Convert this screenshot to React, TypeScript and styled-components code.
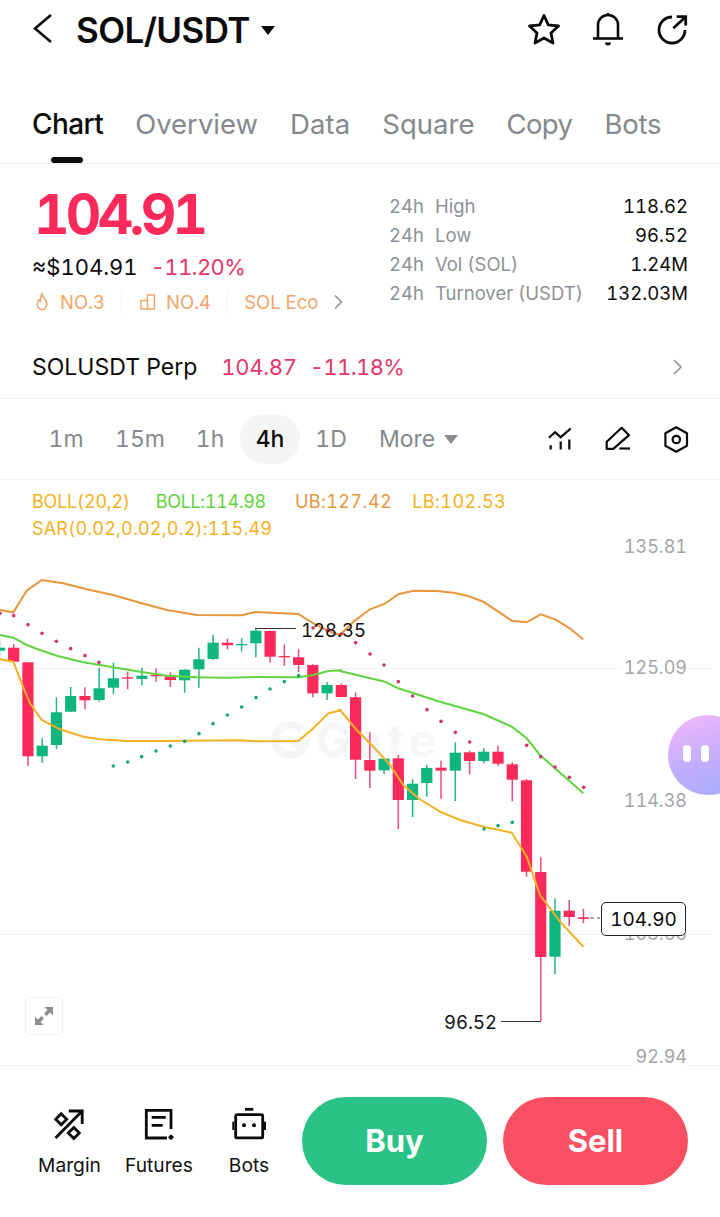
import React from 'react';
import styled, { createGlobalStyle } from 'styled-components';

const Global = createGlobalStyle`
  html, body { margin: 0; padding: 0; background: #fff; }
  * { box-sizing: border-box; }
  body { font-family: Inter, "Liberation Sans", sans-serif; color: #0b0b0b; -webkit-font-smoothing: antialiased; font-variant-numeric: tabular-nums; }
`;

const Page = styled.div`
  width: 720px;
  height: 1217px;
  display: flex;
  flex-direction: column;
  overflow: hidden;
  background: #fff;
`;

const Header = styled.header`
  height: 60px;
  display: flex;
  align-items: center;
  padding: 0 30px 0 32px;
`;
const BackIcon = styled.svg`
  width: 24px;
  height: 32px;
  flex: none;
`;
const Pair = styled.h1`
  margin: 0 0 0 20px;
  font-size: 35px;
  line-height: 40px;
  font-weight: 600;
  letter-spacing: -0.6px;
`;
const Caret = styled.span`
  width: 0;
  height: 0;
  margin-left: 11px;
  border-left: 7px solid transparent;
  border-right: 7px solid transparent;
  border-top: 9px solid #0b0b0b;
`;
const HeaderIcons = styled.div`
  margin-left: auto;
  display: flex;
  gap: 28px;
`;
const IconSvg = styled.svg<{ $size?: number }>`
  width: ${p => p.$size ?? 36}px;
  height: ${p => p.$size ?? 36}px;
  flex: none;
  display: block;
`;
const Chevron = styled(IconSvg)`
  margin-left: 4px;
`;

const Tabs = styled.nav`
  height: 104px;
  padding: 41px 32px 0;
  display: flex;
  gap: 32px;
  border-bottom: 1px solid #ececec;
`;
const Tab = styled.div<{ $active?: boolean; $ls?: number }>`
  position: relative;
  height: 62px;
  font-size: ${p => (p.$active ? 28 : 27.5)}px;
  line-height: 46px;
  font-weight: ${p => (p.$active ? 500 : 400)};
  letter-spacing: ${p => (p.$active ? -0.6 : p.$ls ?? 0)}px;
  color: ${p => (p.$active ? '#0b0b0b' : '#85888c')};
  ${p =>
    p.$active &&
    `&::after {
      content: '';
      position: absolute;
      left: 19px;
      bottom: 0;
      width: 32px;
      height: 6px;
      border-radius: 3px;
      background: #0b0b0b;
    }`}
`;

const Summary = styled.section`
  height: 171px;
  padding: 0 32px;
  display: flex;
  justify-content: space-between;
`;
const PriceCol = styled.div`
  display: flex;
  flex-direction: column;
`;
const Price = styled.div`
  margin: 17px 0 0 2px;
  font-size: 55px;
  line-height: 66px;
  font-weight: 700;
  letter-spacing: -3.7px;
  color: #fc2a5a;
`;
const PriceLine = styled.div`
  margin-top: 5px;
  display: flex;
  gap: 13px;
  font-size: 22px;
  line-height: 30px;
`;
const Change = styled.span`
  color: #e2386a;
  letter-spacing: -0.6px;
`;
const TagRow = styled.div`
  margin-top: 8px;
  display: flex;
  align-items: center;
  font-size: 18.5px;
  line-height: 30px;
  color: #f0a469;
`;
const Tag = styled.span<{ $sep?: boolean }>`
  display: flex;
  align-items: center;
  gap: 8px;
  height: 24px;
  ${p => p.$sep && `padding-right: 16px; margin-right: 16px; border-right: 1px solid #f3f3f3;`}
`;
const Stats = styled.div`
  margin-top: 28px;
  width: 299px;
  display: grid;
  grid-template-columns: 1fr auto;
  grid-auto-rows: 29px;
  font-size: 18.5px;
  line-height: 29px;
`;
const StatLabel = styled.span`
  display: flex;
  gap: 11px;
  color: #8e9196;
  white-space: nowrap;
`;
const StatValue = styled.span`
  text-align: right;
  color: #0b0b0b;
`;

const PerpRow = styled.section`
  height: 64px;
  padding: 0 34px 0 32px;
  display: flex;
  align-items: center;
  font-size: 22px;
  border-bottom: 1px solid #efefef;
`;
const PerpName = styled.span`
  margin-right: 24px;
  font-size: 23px;
`;
const PerpPrice = styled.span`
  margin-right: 13px;
  letter-spacing: -0.3px;
  color: #e2386a;
`;
const PushRight = styled.span`
  margin-left: auto;
  display: flex;
`;

const Intervals = styled.section`
  height: 81px;
  padding: 0 30px 0 36px;
  display: flex;
  align-items: center;
  border-bottom: 1px solid #efefef;
  font-size: 23px;
  color: #85888c;
`;
const Interval = styled.span<{ $active?: boolean; $gap?: number }>`
  display: flex;
  align-items: center;
  justify-content: center;
  height: 50px;
  min-width: 60px;
  margin-right: ${p => p.$gap ?? 0}px;
  border-radius: 25px;
  background: ${p => (p.$active ? '#f5f5f5' : 'transparent')};
  color: ${p => (p.$active ? '#0b0b0b' : '#85888c')};
  font-weight: ${p => (p.$active ? 500 : 400)};
`;
const SmallCaret = styled.span`
  width: 0;
  height: 0;
  margin-left: 9px;
  border-left: 7px solid transparent;
  border-right: 7px solid transparent;
  border-top: 9px solid #8a8d91;
`;
const ToolIcons = styled.div`
  margin-left: auto;
  display: flex;
  gap: 28px;
`;

const Chart = styled.section`
  position: relative;
  height: 586px;
  border-bottom: 1px solid #f0f0f0;
`;
const Legend = styled.div`
  position: relative;
  z-index: 2;
  padding: 8px 32px 0;
  font-size: 18px;
  line-height: 27px;
`;
const LegendRow = styled.div`
  display: flex;
`;
const LegendItem = styled.span<{ $color: string; $ls?: number; $mr?: number }>`
  color: ${p => p.$color};
  letter-spacing: ${p => p.$ls ?? 0}px;
  margin-right: ${p => p.$mr ?? 0}px;
`;
const ChartCanvas = styled.svg`
  position: absolute;
  left: 0;
  top: 0;
  width: 720px;
  height: 585px;
`;
const AxisLabel = styled.span<{ $y: number }>`
  position: absolute;
  right: 33px;
  top: ${p => p.$y}px;
  padding-left: 2px;
  background: #fff;
  font-size: 18px;
  line-height: 24px;
  color: #a3a5a8;
`;
const PriceTag = styled.div`
  position: absolute;
  left: 601px;
  top: 422px;
  width: 85px;
  height: 34px;
  border: 1px solid #222;
  border-radius: 5px;
  background: #fff;
  font-size: 19px;
  line-height: 33px;
  text-align: center;
`;
const Extreme = styled.span<{ $x: number; $y: number }>`
  position: absolute;
  left: ${p => p.$x}px;
  top: ${p => p.$y}px;
  font-size: 18.5px;
  line-height: 24px;
  color: #111;
`;
const Expand = styled.div`
  position: absolute;
  left: 25px;
  top: 517px;
  width: 38px;
  height: 38px;
  display: flex;
  align-items: center;
  justify-content: center;
  border: 1px solid #eeeeee;
  border-radius: 6px;
  background: #fff;
`;
const Bubble = styled.div`
  position: absolute;
  left: 668px;
  top: 235px;
  width: 80px;
  height: 80px;
  display: flex;
  gap: 10px;
  padding: 30px 0 0 15px;
  border-radius: 40px;
  background: linear-gradient(160deg, #f6b9fb 0%, #c5aefb 50%, #a5aefc 100%);
`;
const Eye = styled.span`
  width: 8px;
  height: 17px;
  border-radius: 4px;
  background: #fff;
`;
const Watermark = styled.div`
  position: absolute;
  left: 272px;
  top: 234px;
  display: flex;
  align-items: center;
  gap: 6px;
  font-size: 46px;
  line-height: 52px;
  font-weight: 700;
  letter-spacing: 5px;
  color: #f5f6f6;
`;

const Footer = styled.footer`
  flex: 1;
  display: flex;
  padding: 31px 32px 0 28px;
`;
const Action = styled.div<{ $w: number }>`
  width: ${p => p.$w}px;
  display: flex;
  flex-direction: column;
  align-items: center;
  font-size: 19.2px;
  line-height: 24px;
  color: #111;
  padding-top: 10px;
`;
const ActionIcon = styled.svg`
  width: 36px;
  height: 36px;
  margin-bottom: 10px;
`;
const TradeButton = styled.div<{ $bg: string; $ml: number }>`
  width: 185px;
  height: 88px;
  margin-left: ${p => p.$ml}px;
  border-radius: 44px;
  background: ${p => p.$bg};
  color: #fff;
  font-size: 31px;
  font-weight: 700;
  line-height: 88px;
  text-align: center;
`;

const RED = '#fc2a5a';
const GREEN = '#0fb57f';

type C = ['r' | 'g', number, number, number, number];
const candles: C[] = [
  ['g', 640, 662, 647.7, 650.7],
  ['r', 644, 662, 647.7, 661.7],
  ['r', 662.3, 766, 662.3, 756.3],
  ['g', 738.3, 762.7, 745.7, 756.3],
  ['g', 697.3, 749, 712.3, 745],
  ['g', 687, 711.7, 696, 711.7],
  ['r', 687.3, 709.3, 696, 700.3],
  ['g', 667.7, 701.7, 688.3, 700],
  ['g', 662.7, 694, 678.3, 687.7],
  ['r', 671.7, 689.3, 677.3, 678.7],
  ['g', 667.7, 685.3, 675.7, 679],
  ['r', 668.3, 681.7, 675, 676.3],
  ['r', 672.3, 687, 676.3, 680],
  ['g', 669.3, 692.7, 669.7, 680.3],
  ['g', 647.7, 687.7, 659.3, 669.3],
  ['g', 634.7, 660, 642.7, 659],
  ['r', 638.7, 649.3, 642.7, 645.3],
  ['g', 638.3, 651.7, 644, 645.3],
  ['g', 628.3, 657.3, 630.7, 643.3],
  ['r', 630.7, 662.7, 631, 656.7],
  ['r', 644.3, 666, 656, 657.3],
  ['r', 649.3, 672, 657.3, 665],
  ['r', 664.3, 697.3, 665, 693.3],
  ['g', 682, 700, 685, 693.3],
  ['r', 683.3, 697.3, 685, 697],
  ['r', 692.3, 779, 697.3, 759.7],
  ['r', 732.3, 788, 760, 770.7],
  ['g', 758.3, 774, 758.7, 770.3],
  ['r', 755, 829, 758.3, 800],
  ['g', 779.3, 817, 783.7, 800],
  ['g', 765, 796.7, 768, 783],
  ['r', 760.7, 798.7, 767.7, 770.7],
  ['g', 742.3, 801, 752.7, 770.7],
  ['r', 750.7, 774.3, 752.3, 761],
  ['g', 748.3, 763.3, 751.7, 761],
  ['r', 745.7, 765.7, 751.7, 763.7],
  ['r', 762.3, 801.3, 764.3, 779.7],
  ['r', 779, 876.7, 780.3, 871.7],
  ['r', 857.3, 1021, 872, 957],
  ['g', 898.3, 974, 910.7, 956.7],
  ['r', 900, 926, 910.7, 917],
  ['r', 908.7, 923.3, 917.3, 918.9],
];
const cx = (i: number) => -0.55 + i * 14.245;

const z4 = (pts: number[][]) => pts.map(([x, y]) => [x / 3, 560 + y / 3]);
const z5 = (pts: number[][]) => pts.map(([x, y]) => [340 + x / 3, 560 + y / 3]);
const z6 = (pts: number[][]) => pts.map(([x, y]) => [400 + x / 3, 780 + y / 3]);
const OFFSET = 480;
const poly = (pts: number[][]) => pts.map(([x, y]) => `${x.toFixed(1)},${(y - OFFSET).toFixed(1)}`).join(' ');

const upper = [
  ...z4([[0,150],[40,157],[80,92],[125,60],[190,70],[260,88],[340,105],[420,128],[500,150],[590,165],[725,166],[765,156],[895,162],[940,190],[985,213],[1020,225]]),
  ...z5([[0,225],[40,185],[90,148],[135,131],[175,103],[220,92],[290,93],[340,98],[385,108],[430,125],[470,152],[515,182],[560,187],[602,163],[645,178],[685,202],[730,238]]),
];
const mid = [
  ...z4([[0,225],[40,233],[80,255],[120,270],[170,287],[250,307],[340,322],[420,335],[500,347],[590,352],[680,353],[770,351],[895,352],[940,345],[985,333],[1025,331]]),
  ...z5([[0,333],[135,365],[175,385],[300,425],[430,462],[515,500],[560,535],[600,585],[645,625],[730,700]]),
];
const lower = [
  ...z4([[0,298],[40,305],[65,370],[90,430],[125,480],[180,508],[250,530],[300,538],[380,543],[480,543],[720,541],[760,544],[895,543],[940,505],[985,460],[1025,451]]),
  ...z5([[0,450],[50,510],[100,560],[150,615],[190,675],[235,715]]),
  ...z6([[120,95],[180,120],[250,140],[335,158],[380,230],[420,345],[480,425],[550,500]]),
];
const redDots = [
  ...z4([[0,160],[41,167],[84,194],[126,220],[169,244],[212,266],[255,287],[297,307],[939,204],[982,212],[1024,222]]),
  ...z5([[47,248],[90,282],[132,315],[175,365],[218,408],[261,449],[303,484],[346,517],[389,546],[560,556],[602,590],[645,621],[688,652],[731,682]]),
];
const greenDots = [
  ...z4([[340,618],[383,606],[425,590],[468,573],[511,558],[554,544],[597,521],[639,491],[682,465],[725,441],[768,413],[810,387],[853,365],[896,347]]),
  ...z6([[252,147],[294,137],[337,127]]),
];

const ChartDrawing = () => (
  <ChartCanvas viewBox="0 0 720 585">
    <line x1="0" x2="712" y1={188.5} y2={188.5} stroke="#f1f1f1" />
    <line x1="0" x2="712" y1={454.5} y2={454.5} stroke="#f1f1f1" />
    {candles.map(([k, wt, wb, bt, bb], i) => {
      const c = k === 'r' ? RED : GREEN;
      const x = cx(i);
      return (
        <g key={i}>
          <line x1={x} x2={x} y1={wt - OFFSET} y2={wb - OFFSET} stroke={k === 'r' ? '#ea4c78' : '#25b487'} strokeWidth="1.5" />
          <rect x={x - 5.6} y={bt - OFFSET} width="11.2" height={Math.max(bb - bt, 1.3)} fill={c} />
        </g>
      );
    })}
    <polyline points={poly(upper)} fill="none" stroke="#e8963c" strokeWidth="2" />
    <polyline points={poly(mid)} fill="none" stroke="#62d340" strokeWidth="2" />
    <polyline points={poly(lower)} fill="none" stroke="#f4b024" strokeWidth="2" />
    {redDots.map(([x, y], i) => <circle key={i} cx={x} cy={y - OFFSET} r="1.8" fill="#d4326a" />)}
    {greenDots.map(([x, y], i) => <circle key={i} cx={x} cy={y - OFFSET} r="1.8" fill="#16a67c" />)}
    <line x1="255" x2="296" y1="148.5" y2="148.5" stroke="#333" strokeWidth="1" />
    <path d="M501 541.500H541" stroke="#333" strokeWidth="1" fill="none" />
    <path d="M590 438H600" stroke="#555" strokeWidth="1" strokeDasharray="4 3" />
  </ChartCanvas>
);

const stats = [
  ['High', '118.62'],
  ['Low', '96.52'],
  ['Vol (SOL)', '1.24M'],
  ['Turnover (USDT)', '132.03M'],
];

export default function App() {
  return (
    <Page>
      <Global />
      <Header>
        <BackIcon viewBox="0 0 24 32" fill="none">
          <path d="M20 3 4 16.500 20 30" stroke="#0b0b0b" strokeWidth="2.600" transform="translate(-1 -2)" />
        </BackIcon>
        <Pair>SOL/USDT</Pair>
        <Caret />
        <HeaderIcons>
          <IconSvg viewBox="0 0 36 36" fill="none" stroke="#0b0b0b" strokeWidth="2.800" strokeLinejoin="round">
            <path d="M18 3.500l4.300 9.300 10.200 1.200-7.500 7 2 10.100-9-5.100-9 5.100 2-10.100-7.500-7 10.200-1.200z" />
          </IconSvg>
          <IconSvg viewBox="0 0 36 36" fill="none" stroke="#0b0b0b" strokeWidth="2.600">
            <path d="M8 26V13a10 10 0 0 1 20 0v13" />
            <path d="M3 26.500h30" />
            <circle cx="18" cy="2.300" r="1.500" fill="#0b0b0b" stroke="none" />
            <path d="M15 30.500h6a3 3 0 0 1-6 0z" fill="#0b0b0b" stroke="none" />
          </IconSvg>
          <IconSvg viewBox="0 0 36 36" fill="none" stroke="#0b0b0b" strokeWidth="2.800">
            <path d="M18 5A13 13 0 1 0 31 18" />
            <path d="M22.700 4.700h9v8.800M31.700 4.700 19.300 16.300" />
          </IconSvg>
        </HeaderIcons>
      </Header>
      <Tabs>
        <Tab $active>Chart</Tab>
        <Tab>Overview</Tab>
        <Tab $ls={0.1}>Data</Tab>
        <Tab>Square</Tab>
        <Tab $ls={-0.6}>Copy</Tab>
        <Tab $ls={-0.2}>Bots</Tab>
      </Tabs>
      <Summary>
        <PriceCol>
          <Price>104.91</Price>
          <PriceLine>
            <span>≈$104.91</span>
            <Change>-11.20%</Change>
          </PriceLine>
          <TagRow>
            <Tag $sep>
              <IconSvg $size={20} viewBox="0 0 20 20" fill="none" stroke="#f0a469" strokeWidth="1.500">
                <path d="M10 2c.5 3 4.800 5 4.800 10a4.800 5.500 0 0 1-9.600 0c0-2 .8-3.300 1.800-4.300.3 1 .8 1.500 1.400 1.800C8.400 7 8.800 4 10 2z" />
              </IconSvg>
              NO.3
            </Tag>
            <Tag $sep>
              <IconSvg $size={20} viewBox="0 0 20 20" fill="none" stroke="#f0a469" strokeWidth="1.500">
                <path d="M3 8.500h6.500V17H3zM9.500 17V3H16.500V17H9.500z" />
              </IconSvg>
              NO.4
            </Tag>
            <Tag>
              SOL Eco
              <Chevron $size={16} viewBox="0 0 16 16" fill="none" stroke="#8e9196" strokeWidth="1.500">
                <path d="M5 1.500 11.500 8 5 14.500" />
              </Chevron>
            </Tag>
          </TagRow>
        </PriceCol>
        <Stats>
          {stats.map(([l, v]) => (
            <React.Fragment key={l}>
              <StatLabel><span>24h</span><span>{l}</span></StatLabel>
              <StatValue>{v}</StatValue>
            </React.Fragment>
          ))}
        </Stats>
      </Summary>
      <PerpRow>
        <PerpName>SOLUSDT Perp</PerpName>
        <PerpPrice>104.87</PerpPrice>
        <Change>-11.18%</Change>
        <PushRight>
          <IconSvg $size={16} viewBox="0 0 16 16" fill="none" stroke="#8e9196" strokeWidth="1.500">
            <path d="M4 1 11 8 4 15" />
          </IconSvg>
        </PushRight>
      </PerpRow>
      <Intervals>
        <Interval $gap={14}>1m</Interval>
        <Interval $gap={10}>15m</Interval>
        <Interval>1h</Interval>
        <Interval $active $gap={1}>4h</Interval>
        <Interval $gap={18}>1D</Interval>
        <Interval>More<SmallCaret /></Interval>
        <ToolIcons>
          <IconSvg $size={30} viewBox="0 0 30 30" fill="none" stroke="#0b0b0b" strokeWidth="2.200">
            <path d="M5 13.800 11 8.200 16.700 13.200 26.700 4.500" />
            <path d="M6.700 21.200v4.300M16.700 17.500v8M25.300 15.500v10" />
          </IconSvg>
          <IconSvg $size={30} viewBox="0 0 30 30" fill="none" stroke="#0b0b0b" strokeWidth="2.200" strokeLinejoin="round">
            <path d="M4.700 24.800V17.800L19.700 3.800 27 11.200 11.300 24.800z" />
            <path d="M17.300 24.500H28" />
          </IconSvg>
          <IconSvg $size={30} viewBox="0 0 30 30" fill="none" stroke="#0b0b0b" strokeWidth="2.200" strokeLinejoin="round">
            <path d="M16.200 3.200 27 9.300V21.700L16.200 27.800 5.400 21.700V9.300z" />
            <circle cx="16.300" cy="15.500" r="3.700" />
          </IconSvg>
        </ToolIcons>
      </Intervals>
      <Chart>
        <Watermark>
          <IconSvg $size={38} viewBox="0 0 42 42" fill="none" stroke="#f5f6f6" strokeWidth="9">
            <path d="M33 9A17 17 0 1 0 37 25H21" />
          </IconSvg>
          Gate
        </Watermark>
        <ChartDrawing />
        <Legend>
          <LegendRow>
            <LegendItem $color="#f4b024" $ls={-0.2} $mr={26}>BOLL(20,2)</LegendItem>
            <LegendItem $color="#62d340" $ls={-0.35} $mr={29}>BOLL:114.98</LegendItem>
            <LegendItem $color="#e8963c" $ls={0.45} $mr={20}>UB:127.42</LegendItem>
            <LegendItem $color="#f4b024" $ls={0.45}>LB:102.53</LegendItem>
          </LegendRow>
          <LegendRow>
            <LegendItem $color="#f4b024" $ls={0.2}>SAR(0.02,0.02,0.2):115.49</LegendItem>
          </LegendRow>
        </Legend>
        <AxisLabel $y={55}>135.81</AxisLabel>
        <AxisLabel $y={176}>125.09</AxisLabel>
        <AxisLabel $y={309}>114.38</AxisLabel>
        <AxisLabel $y={442}>103.66</AxisLabel>
        <AxisLabel $y={565}>92.94</AxisLabel>
        <Extreme $x={301} $y={138}>128.35</Extreme>
        <Extreme $x={444} $y={530}>96.52</Extreme>
        <PriceTag>104.90</PriceTag>
        <Expand>
          <IconSvg $size={20} viewBox="0 0 20 20" fill="#8c8c8c" stroke="none">
            <path d="M10.500 1H19V9.500L16 6.500 12.500 10 10 7.500 13.500 4zM9.500 19H1V10.500L4 13.500 7.500 10 10 12.500 6.500 16z" />
          </IconSvg>
        </Expand>
        <Bubble><Eye /><Eye /></Bubble>
      </Chart>
      <Footer>
        <Action $w={83}>
          <ActionIcon viewBox="0 0 36 36" fill="none" stroke="#0b0b0b" strokeWidth="2.800">
            <path d="M3.500 31 30.200 4M16.800 4H30.200V17" />
            <path d="M9.200 6.800 14.700 12.300 9.200 17.800 3.700 12.300zM21.800 20.500 27.300 26 21.800 31.500 16.300 26z" />
          </ActionIcon>
          Margin
        </Action>
        <Action $w={96}>
          <ActionIcon viewBox="0 0 36 36" fill="none" stroke="#0b0b0b" strokeWidth="2.800">
            <path d="M30 22V3.300H5.300V31H26" />
            <path d="M10.700 10.300H24.700M10.700 18.300H21.700" />
            <path d="M30 27.300 33 30.300 30 33.300 27 30.300z" fill="#0b0b0b" stroke="none" />
          </ActionIcon>
          Futures
        </Action>
        <Action $w={84}>
          <ActionIcon viewBox="0 0 36 36" fill="none" stroke="#0b0b0b" strokeWidth="2.800">
            <rect x="4.700" y="7.700" width="27" height="23.200" rx="1.500" />
            <path d="M14 2.300H22.300" />
            <path d="M1.300 14.700h2v8.300h-2zM33 14.700h2v8.300h-2z" fill="#0b0b0b" stroke="none" />
            <circle cx="13" cy="18.300" r="2" fill="#0b0b0b" stroke="none" />
            <circle cx="23" cy="18.300" r="2" fill="#0b0b0b" stroke="none" />
          </ActionIcon>
          Bots
        </Action>
        <TradeButton $bg="#2bc287" $ml={11}>Buy</TradeButton>
        <TradeButton $bg="#f84f63" $ml={16}>Sell</TradeButton>
      </Footer>
    </Page>
  );
}
